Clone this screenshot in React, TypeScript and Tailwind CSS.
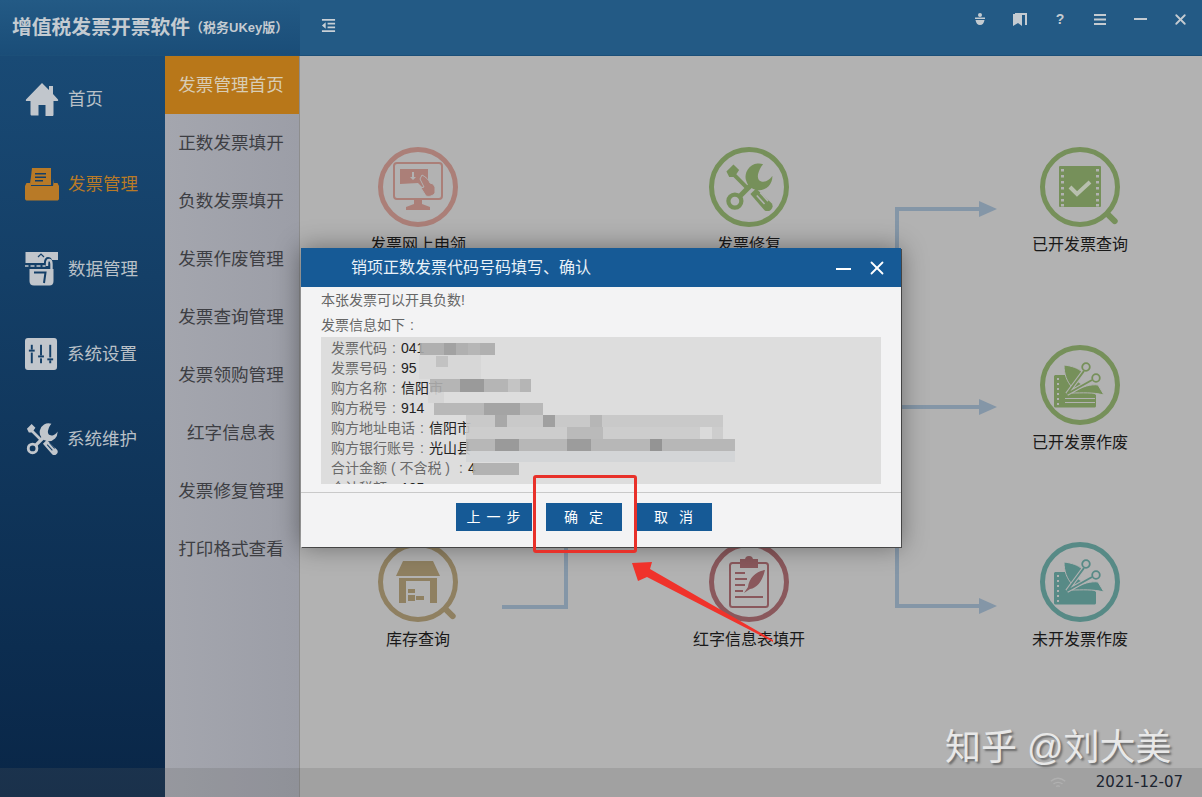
import type { ReactNode } from "react";
import { X } from "lucide-react";

const FONT = "font-['Liberation_Sans','Noto_Sans_CJK_SC',sans-serif]";

const PINK = "#ab7f78";
const GREEN = "#76905a";
const TEAL = "#578a86";
const TAN = "#8f8061";
const ROSE = "#8a585c";
const LINE = "#8496a7";
const CANVAS = "#b2b2b2";
const NAVY = "#143f68";

type NodeProps = {
  left: number;
  top: number;
  label: string;
  color: string;
  lens?: boolean;
  children: ReactNode;
};

const sideItems = [
  { label: "首页", icon: "home" },
  { label: "发票管理", icon: "invoice", active: true },
  { label: "数据管理", icon: "data" },
  { label: "系统设置", icon: "settings" },
  { label: "系统维护", icon: "tools" },
];

const subItems = [
  "发票管理首页",
  "正数发票填开",
  "负数发票填开",
  "发票作废管理",
  "发票查询管理",
  "发票领购管理",
  "红字信息表",
  "发票修复管理",
  "打印格式查看",
];

const invoiceLines = [
  { label: "发票代码", value: "041" },
  { label: "发票号码", value: "95" },
  { label: "购方名称", value: "信阳市" },
  { label: "购方税号", value: "914" },
  { label: "购方地址电话", value: "信阳市" },
  { label: "购方银行账号", value: "光山县" },
  { label: "合计金额 ( 不含税 ) ", value: "4" },
  { label: "合计税额", value: "105" },
];

// pixelated blur strips over the invoice details: [left, top, width, height, colour]
const mosaic: [number, number, number, number, string][] = [
  [420, 343, 75, 12, "#ababab"],
  [419, 355, 62, 24, "#d6d6d6"],
  [430, 379, 101, 13, "#b0b0b0"],
  [428, 392, 16, 11, "#d4d4d4"],
  [434, 403, 109, 12, "#b4b4b4"],
  [466, 415, 257, 12, "#c6c6c6"],
  [466, 427, 257, 12, "#cbcbcb"],
  [466, 439, 269, 12, "#b2b2b2"],
  [466, 451, 269, 11, "#d2d4d6"],
  [473, 463, 46, 12, "#adadad"],
];

const mosaicDark: [number, number, number, number, string][] = [
  [444, 343, 12, 12, "#a2a2a2"],
  [468, 343, 12, 12, "#b6b6b6"],
  [436, 356, 12, 11, "#c2c2c2"],
  [460, 379, 24, 13, "#9a9a9a"],
  [508, 379, 12, 13, "#c4c4c4"],
  [484, 403, 36, 12, "#a4a4a4"],
  [495, 415, 12, 12, "#a8a8a8"],
  [543, 415, 12, 12, "#a0a0a0"],
  [590, 415, 12, 12, "#b6b6b6"],
  [495, 439, 24, 12, "#9a9a9a"],
  [567, 439, 24, 12, "#9c9c9c"],
  [567, 427, 36, 12, "#bababa"],
  [650, 439, 12, 12, "#949494"],
  [700, 427, 12, 12, "#dadada"],
];

const ToolsGlyph = ({ color, hole, className }: { color: string; hole: string; className: string }) => (
  <svg viewBox="0 0 34 34" className={className} fill={color}>
    <path d="M1 6 6 1l4 4-2 3 9 9-2 2-9-9-3 0z" />
    <circle cx="7" cy="27" r="4.600" fill="none" stroke={color} strokeWidth="3" />
    <path d="M10.500 23.500 21 13" stroke={color} strokeWidth="3.600" />
    <path d="M27 .8A9.500 9.500 0 1 0 33.500 9c-.5 1-1.500 2.500-4.500 4-2 .5-4 .2-5-1-1-1.500-1-3.500 0-6 .5-1.500 1.500-3.500 3-5.200z" />
    <path d="M22 18 33 28.500a3.600 3.600 0 0 1-5 5L18 22z" />
    <path d="m22.500 23 5.500 6M25 21l5.500 6" stroke={hole} strokeWidth="1.100" />
  </svg>
);

const SideIcon = ({ name, color }: { name: string; color: string }) => {
  if (name === "home") {
    return (
      <svg viewBox="0 0 34 34" className="h-[34px] w-[34px]" fill={color}>
        <path d="M17 1 1 17.500c-.5 1 0 1.500 1 1.500h3.500v13c0 1 .5 1.500 1.500 1.500h6.500V23h7v11H27c1 0 1.500-.5 1.500-1.500V19H32c1 0 1.500-.5 1-1.500L28 12V4h-4v4z" />
      </svg>
    );
  }
  if (name === "invoice") {
    return (
      <svg viewBox="0 0 34 34" className="h-[34px] w-[34px]" fill={color}>
        <path d="M7 1h19v17H5z" />
        <path d="M10 6h11v1.500H10zM10 9.500h11V11H10zM10 13h8v1.500h-8z" fill={NAVY} />
        <path d="M5 12v4H1.500L0 19v12.500C0 33 1 33.500 2 33.500h30c1 0 2-.5 2-2V19l-1.500-3H29v-4l-1 7H6z" />
      </svg>
    );
  }
  if (name === "data") {
    return (
      <svg viewBox="0 0 34 34" className="h-[34px] w-[34px]" fill={color}>
        <path d="M.5 0H33v8h-6c-.5-2-2-3-4-3s-4 2-4 5v1H.5z" />
        <path d="m13 5 3-3 3 3" fill="none" stroke={NAVY} strokeWidth="1.200" />
        <path d="M0 14h3.500M5.500 14h4M11.500 14h4M17.500 14h3" stroke={color} strokeWidth="1.500" />
        <path d="M22 14c0-4 0-6 2-6s2.500 1.500 2.500 4v5" fill="none" stroke={color} strokeWidth="2.400" />
        <path d="M4.500 17h24v12c0 3-1.500 4.500-4 4.500H9c-3 0-4.500-1.500-4.500-4.500z" />
        <path d="M9 20.500h11.500L19 31" fill="none" stroke={NAVY} strokeWidth="2" />
      </svg>
    );
  }
  if (name === "settings") {
    return (
      <svg viewBox="0 0 34 34" className="h-[33px] w-[33px]">
        <rect width="33" height="33" rx="3" fill={color} />
        <g fill={NAVY}>
          <rect x="6" y="7" width="2" height="5" />
          <rect x="4" y="12" width="6" height="2" />
          <rect x="6" y="15" width="2" height="11" />
          <rect x="15.500" y="7" width="2" height="11" />
          <rect x="13.500" y="18" width="6" height="2" />
          <rect x="15.500" y="21" width="2" height="5" />
          <rect x="25" y="7" width="2" height="13" />
          <rect x="23" y="21" width="6" height="2" />
          <rect x="25" y="23" width="2" height="3" />
        </g>
      </svg>
    );
  }
  return <ToolsGlyph color={color} hole={NAVY} className="ml-[1px] h-[32px] w-[32px]" />;
};

const FlowNode = ({ left, top, label, color, lens = true, children }: NodeProps) => (
  <div
    className="absolute flex w-[120px] flex-col items-center"
    style={{ left: left - 300, top: top - 56 }}
  >
    <div className="relative h-[80px] w-[80px]">
      <div className="h-[80px] w-[80px] rounded-full border-[5px]" style={{ borderColor: color }} />
      {lens ? (
        <div
          className="absolute left-[64px] top-[68px] h-[6px] w-[15px] rotate-45 rounded-sm"
          style={{ backgroundColor: color }}
        />
      ) : null}
      <div className="absolute inset-0 flex items-center justify-center">{children}</div>
    </div>
    <div className="mt-[8px] whitespace-nowrap text-[16px] leading-[20px] text-[#191919]">{label}</div>
  </div>
);

const ScissorsGlyph = ({ color, bg, stripe }: { color: string; bg: string; stripe?: boolean }) => (
  <svg viewBox="0 0 52 46" className="h-[46px] w-[52px]" fill={color}>
    <path d="M1 13h13l28 20v11c0 1-1 1.500-2 1.500H2c-1 0-2-.5-2-1.500V14z" />
    <path d="M10 3c8 1 14 3 18 7l-2 8-8 7c-5-5-8-13-8-22z" stroke={bg} strokeWidth="1" />
    <path d="M18 31c10-7 20-9 26-8l6 10c-12-3-22-2-32-2z" stroke={bg} strokeWidth="1" />
    <path d="M13 32 30 9M13 32l25-14" stroke={bg} strokeWidth="4" />
    <path d="M13 32 30 9M13 32l25-14" stroke={color} strokeWidth="2" />
    <circle cx="32" cy="5" r="3.800" fill={bg} stroke={color} strokeWidth="1.800" />
    <circle cx="42" cy="16" r="3.800" fill={bg} stroke={color} strokeWidth="1.800" />
    <g fill={bg}>
      {[16, 21, 26, 31, 36, 41].map((y) => (
        <rect key={y} x="3" y={y} width="2" height="2" />
      ))}
    </g>
    {stripe ? <path d="M11 36h30v1H11zM11 40h30v1H11z" fill={bg} /> : null}
  </svg>
);

const Dashboard = () => (
  <>
    {/* connector lines between the nodes */}
    <svg className="absolute inset-0 h-full w-full" viewBox="300 56 902 741" fill="none">
      <g stroke={LINE} strokeWidth="4">
        <path d="M502 607h64v-60" />
        <path d="M897 300v-91h86" />
        <path d="M897 407h86" />
        <path d="M897 547v59h86" />
      </g>
      <g fill={LINE}>
        <path d="m979 201 18 8-18 8z" />
        <path d="m979 399 18 8-18 8z" />
        <path d="m979 598 18 8-18 8z" />
      </g>
    </svg>

    <FlowNode left={358} top={147} label="发票网上申领" color={PINK} lens={false}>
      <svg viewBox="0 0 52 52" className="h-[52px] w-[52px]" fill="none">
        <rect x="2" y="2" width="48" height="36" rx="3" stroke={PINK} strokeWidth="2" />
        <path d="M8 8h28v13h-3l3 3-6 2-4-4-18 1z" fill={PINK} />
        <path d="m20 11 0 5h-2l3 3 3-3h-2v-5z" fill={CANVAS} />
        <path d="M30 14c4 2 7 5 8 8l3 1 2 3v6c-2 3-6 4-9 3l-5-8 3-1-4-8z" fill={PINK} stroke={CANVAS} />
        <path d="M22 39h8v4l8 3v3H14v-3l8-3z" fill={PINK} />
      </svg>
    </FlowNode>

    <FlowNode left={689} top={147} label="发票修复" color={GREEN} lens={false}>
      <ToolsGlyph color={GREEN} hole={CANVAS} className="h-[48px] w-[48px]" />
    </FlowNode>

    <FlowNode left={1020} top={147} label="已开发票查询" color={GREEN}>
      <svg viewBox="0 0 42 42" className="h-[42px] w-[42px]">
        <rect width="42" height="41" rx="1" fill={GREEN} />
        <g fill={CANVAS}>
          {[3, 9, 15, 21, 27, 33, 38].map((y) => (
            <g key={y}>
              <rect x="2" y={y} width="3" height="2.500" />
              <rect x="37" y={y} width="3" height="2.500" />
            </g>
          ))}
        </g>
        <path d="m11 21 7 7 13-12" stroke="#b8bfae" strokeWidth="4" fill="none" />
      </svg>
    </FlowNode>

    <FlowNode left={1020} top={345} label="已开发票作废" color={GREEN} lens={false}>
      <ScissorsGlyph color={GREEN} bg={CANVAS} stripe />
    </FlowNode>

    <FlowNode left={1020} top={542} label="未开发票作废" color={TEAL} lens={false}>
      <ScissorsGlyph color={TEAL} bg={CANVAS} />
    </FlowNode>

    <FlowNode left={358} top={542} label="库存查询" color={TAN}>
      <svg viewBox="0 0 46 46" className="h-[46px] w-[46px]" fill={TAN}>
        <path d="M8 2h30l7 15H1z" />
        <path d="M4 19h38v25H4z" />
        <path d="M11 22h24v22H11z" fill={CANVAS} />
        <path d="M13 30h7v4h-7zM13 36h7v6h-7zM21 37h8v4h-8z" />
      </svg>
    </FlowNode>

    <FlowNode left={689} top={542} label="红字信息表填开" color={ROSE} lens={false}>
      <svg viewBox="0 0 42 52" className="h-[52px] w-[42px]" fill="none" stroke={ROSE} strokeWidth="2">
        <rect x="2" y="7" width="38" height="44" rx="2.500" />
        <path d="M13 4h16v7H13z" fill={ROSE} />
        <circle cx="21" cy="4" r="3" fill={ROSE} />
        <path d="M7 17h10M7 23h12M7 29h10M7 35h8M7 41h28" />
        <path d="M37 14c-9 1-16 8-17 17l-4 6 6-4c8-1 13-10 15-19z" fill={ROSE} stroke="none" />
      </svg>
    </FlowNode>
  </>
);

// full-width colon, centred in its cell as the original's font draws it
const Colon = () => <span className="inline-block w-[14px] text-center">:</span>;

const InvoiceDialog = () => (
  <div className="absolute left-[301px] top-[248px] flex h-[299px] w-[600px] flex-col bg-[#f3f3f4] shadow-[0_0_24px_rgba(0,0,0,0.4),1px_1px_0_#555]">
    <div className="flex h-[39px] items-center bg-[#165a96] pl-[50px] pr-[13px] text-[16px] text-[#e8f1f8]">
      <span className="flex-1">销项正数发票代码号码填写、确认</span>
      <div className="mr-[15px] mt-[2px] h-[2px] w-[15px] bg-white" />
      <X size={22} strokeWidth={2} className="text-white" />
    </div>
    <div className="flex-1 px-[20px] text-[14px] text-[#666]">
      <p className="mt-[4px] leading-[18px]">本张发票可以开具负数!</p>
      <p className="mt-[7px] leading-[18px]">
        发票信息如下
        <Colon />
      </p>
      <div className="mt-[3px] h-[147px] w-[560px] overflow-hidden bg-[#dddddd] px-[10px] pt-[1px]">
        {invoiceLines.map((line) => (
          <div key={line.label} className="h-[20px] whitespace-pre leading-[20px]">
            <span className="text-[#6a6a6a]">
              {line.label}
              <Colon />
            </span>
            <span className="text-[#222]">{line.value}</span>
          </div>
        ))}
      </div>
    </div>
    <div className="flex h-[55px] gap-[14px] border-t border-[#c9c9c9] pl-[155px] pt-[10px] text-[14px] text-white">
      {["上 一 步", "确  定", "取  消"].map((label) => (
        <div
          key={label}
          className="flex h-[28px] w-[76px] items-center justify-center whitespace-pre bg-[#165a96] tracking-[1px]"
        >
          {label}
        </div>
      ))}
    </div>
  </div>
);

const TopIcon = ({ children }: { children: ReactNode }) => (
  <div className="flex h-[16px] w-[40px] items-center justify-center">{children}</div>
);

export default function App() {
  return (
    <div className={`relative flex h-[797px] w-[1202px] flex-col overflow-hidden bg-[#b2b2b2] ${FONT}`}>
      <header className="flex h-[56px] shrink-0 border-b border-[#1c4f78] bg-[#235a85]">
        <div className="flex w-[300px] items-center bg-gradient-to-b from-[#235a85] to-[#1a4d78] pl-[12px] text-[#c4cbd1]">
          <span className="whitespace-nowrap text-[19.800px] font-bold">增值税发票开票软件</span>
          <span className="whitespace-nowrap text-[13px] font-bold">（税务UKey版）</span>
        </div>
        <div className="flex flex-1 items-start justify-between pl-[21px] pr-[2px]">
          <svg viewBox="0 0 16 16" className="mt-[18px] h-[15px] w-[15px]" fill="#c9d0d6">
            <path d="M1 1h14v2H1zM7 5h8v2H7zM7 9h8v2H7zM1 13h14v2H1zM5 4.500v7L1 8z" />
          </svg>
          <div className="mt-[11px] flex items-center text-[#c4cbd1]">
            <TopIcon>
              <svg viewBox="0 0 10 12" className="h-[12px] w-[10px]" fill="#c4cbd1">
                <circle cx="5" cy="2" r="2" />
                <path d="M0 4.500h10v1.500H0zM.5 7h9c-.5 3-2 5-4.500 5S1 10 .5 7z" />
              </svg>
            </TopIcon>
            <TopIcon>
              <svg viewBox="0 0 14 13" className="h-[13px] w-[14px]" fill="#c4cbd1">
                <path d="M0 1h9v12l-4-3-5 3z" />
                <path d="M2 0h12v12h-2V2H2z" />
              </svg>
            </TopIcon>
            <TopIcon>
              <span className="text-[14px] font-bold leading-[14px]">?</span>
            </TopIcon>
            <TopIcon>
              <svg viewBox="0 0 12 11" className="h-[11px] w-[12px]" fill="#c4cbd1">
                <path d="M0 0h12v2H0zM0 4.500h12v2H0zM0 9h12v2H0z" />
              </svg>
            </TopIcon>
            <TopIcon>
              <div className="h-[2px] w-[13px] bg-[#c4cbd1]" />
            </TopIcon>
            <TopIcon>
              <X size={17} strokeWidth={2.600} />
            </TopIcon>
          </div>
        </div>
      </header>

      <div className="flex min-h-0 flex-1">
        <nav className="flex w-[165px] shrink-0 flex-col gap-[51px] bg-gradient-to-b from-[#194a75] to-[#092647] pl-[25px] pt-[26px]">
          {sideItems.map((item) => {
            const color = item.active ? "#b87a27" : "#c1c6cc";
            return (
              <div key={item.label} className="flex h-[34px] items-center gap-[9px]">
                <SideIcon name={item.icon} color={color} />
                <span className={`text-[17.500px] ${item.active ? "text-[#b87a27]" : "text-[#b9c0c7]"}`}>
                  {item.label}
                </span>
              </div>
            );
          })}
        </nav>
        <div className="flex w-[135px] shrink-0 flex-col border-r border-[#8d8d8d] bg-gradient-to-r from-[#a4a6ae] to-[#9c9ea7] pr-[2px]">
          {subItems.map((label, i) => (
            <div
              key={label}
              className={`flex h-[58px] shrink-0 items-center justify-center whitespace-nowrap text-[17.600px] ${
                i === 0 ? "-mr-[2px] bg-[#b87719] pr-[2px] text-[#d8cdb5]" : "text-[#3d3e43]"
              }`}
            >
              {label}
            </div>
          ))}
        </div>
        <main className="relative flex-1">
          <Dashboard />
        </main>
      </div>

      {/* status strip over the bottom of the window */}
      <footer className="absolute inset-x-0 bottom-0 flex h-[29px] items-center justify-end bg-[#5e5e5e]/20 pr-[19px]">
        <svg viewBox="0 0 20 14" className="mr-[29px] h-[14px] w-[18px]" fill="none" stroke="#b0b0b0" strokeWidth="1.500">
          <path d="M2 5c5-4 11-4 16 0M5 8c3-2 7-2 10 0M8 11c1-1 3-1 4 0" />
        </svg>
        <span className="font-['DejaVu_Sans',sans-serif] text-[15px] text-[#1b2430]">2021-12-07</span>
      </footer>

      <InvoiceDialog />

      {/* pixelated strips hiding the taxpayer's details */}
      {mosaic.map(([l, t, w, h, c]) => (
        <div
          key={`${l}-${t}`}
          className="absolute opacity-90"
          style={{ left: l, top: t, width: w, height: h, backgroundColor: c }}
        />
      ))}
      {mosaicDark.map(([l, t, w, h, c]) => (
        <div key={`d-${l}-${t}`} className="absolute" style={{ left: l, top: t, width: w, height: h, backgroundColor: c }} />
      ))}

      {/* red annotation drawn on top of the screenshot */}
      <div className="absolute left-[533px] top-[475px] h-[78px] w-[104px] rounded-[3px] border-[3px] border-[#e8312a]" />
      <svg className="absolute left-[625px] top-[555px] h-[90px] w-[150px]" viewBox="0 0 150 90">
        <path d="M7 8 27 7l-2 7 123 71v2L22 22l-9 4z" fill="#f0332b" />
      </svg>

      <div className="absolute left-[945px] top-[727px] whitespace-nowrap text-[36px] leading-[42px] text-[#e8e8e8] [text-shadow:2px_2px_2px_rgba(60,60,60,0.6)]">
        知乎 @刘大美
      </div>
    </div>
  );
}
